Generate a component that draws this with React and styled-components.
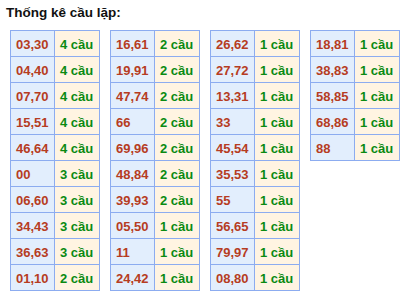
import React from 'react';
import styled, { createGlobalStyle } from 'styled-components';

const GlobalStyle = createGlobalStyle`
	body {
		margin: 0;
		background: #fff;
		font-family: "Liberation Sans", Arial, sans-serif;
	}
`

const columns = [
	[['03,30', 4], ['04,40', 4], ['07,70', 4], ['15,51', 4], ['46,64', 4], ['00', 3], ['06,60', 3], ['34,43', 3], ['36,63', 3], ['01,10', 2]],
	[['16,61', 2], ['19,91', 2], ['47,74', 2], ['66', 2], ['69,96', 2], ['48,84', 2], ['39,93', 2], ['05,50', 1], ['11', 1], ['24,42', 1]],
	[['26,62', 1], ['27,72', 1], ['13,31', 1], ['33', 1], ['45,54', 1], ['35,53', 1], ['55', 1], ['56,65', 1], ['79,97', 1], ['08,80', 1]],
	[['18,81', 1], ['38,83', 1], ['58,85', 1], ['68,86', 1], ['88', 1]],
]

const Wrap = styled.div`
	padding: 4px 6px;
`

const Title = styled.div`
	font-size: 13.5px;
	font-weight: bold;
	line-height: 17px;
	color: #111;
`

const Tables = styled.div`
	display: flex;
	align-items: flex-start;
	gap: 10px;
	margin: 9px 0 0 4px;
`

const Table = styled.table`
	border-collapse: collapse;
	font-size: 13px;
	font-weight: bold;
`

const Row = styled.tr`
	height: 26px;
`

const Cell = styled.td`
	border: 1px solid #8cacf0;
	padding: 2px 5px 0;
	line-height: 15px;
	text-align: left;
	white-space: nowrap;
	box-sizing: border-box;
	width: ${({$count}) => $count ? '45px' : '44px'};
	background: ${({$count}) => $count ? '#fff4e2' : '#e2eefd'};
	color: ${({$count}) => $count ? '#0a8a12' : '#b63c22'};
`

const PairTable = ({rows}) => (
	<Table>
		<tbody>
			{rows.map(([pair, n]) => (
				<Row key={pair}>
					<Cell>{pair}</Cell>
					<Cell $count>{n} cầu</Cell>
				</Row>
			))}
		</tbody>
	</Table>
)

export default function App() {
	return (
		<Wrap>
			<GlobalStyle />
			<Title>Thống kê cầu lặp:</Title>
			<Tables>
				{columns.map((rows, i) => <PairTable key={i} rows={rows} />)}
			</Tables>
		</Wrap>
	)
}
